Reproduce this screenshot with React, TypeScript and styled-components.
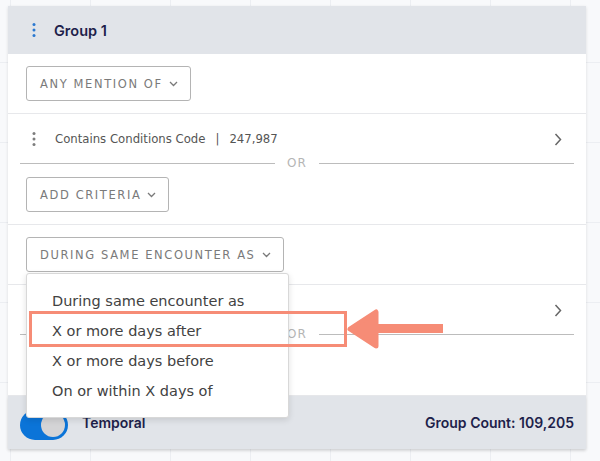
import React from "react";
import styled, { createGlobalStyle } from "styled-components";

const FONT = `"DejaVu Sans", "Noto Sans", sans-serif`;
const BOLD = `Inter, "Noto Sans", sans-serif`;

const Global = createGlobalStyle`
  html, body { margin: 0; padding: 0; }
  body {
    width: 600px;
    height: 461px;
    overflow: hidden;
    font-family: ${FONT};
    background-color: #f8f9fb;
    background-image:
      linear-gradient(to right, #eceef2 1px, transparent 1px),
      linear-gradient(to bottom, #eceef2 1px, transparent 1px);
    background-size: 80px 80px;
    background-position: 10px 62px;
  }
`;

const Stage = styled.div`
  position: relative;
  padding: 6px 14px 0 8px;
`;

const Card = styled.div`
  background: #fff;
  box-shadow: 0 1px 3px rgba(0, 0, 0, 0.12);
`;

const Header = styled.div`
  height: 48px;
  background: #e1e4e9;
  display: flex;
  align-items: center;
  padding-left: 24px;
  gap: 18px;
`;

const Title = styled.div`
  font-family: ${BOLD};
  font-size: 14.5px;
  font-weight: 600;
  color: #1e1f4b;
`;

const Section = styled.div<{ $pt?: number }>`
  padding: ${(p) => p.$pt ?? 12}px 12px 12px 18px;
  border-bottom: 1px solid #e7e8eb;
  display: flex;
  flex-direction: column;
  align-items: flex-start;
`;

const CriteriaRow = styled.div`
  align-self: stretch;
  height: 24px;
  display: flex;
  align-items: center;
  padding-left: 6px;
  padding-right: 12px;
  gap: 19px;
`;

const CriteriaText = styled.div`
  flex: 1;
  font-size: 11.7px;
  color: #555;
  white-space: nowrap;
`;

const Sep = styled.span`
  margin: 0 10px;
`;

const Divider = styled.div`
  align-self: stretch;
  margin: 6px 0 0 -6px;
  height: 12px;
  display: flex;
  align-items: center;
  gap: 12px;
  &::before, &::after {
    content: "";
    flex: 1;
    height: 1px;
    background: #bcbcbc;
  }
`;

const OrText = styled.span`
  font-size: 12px;
  letter-spacing: 1px;
  color: #b5b5b5;
`;

const SelectButton = styled.button<{ $mt?: number }>`
  margin-top: ${(p) => p.$mt ?? 0}px;
  height: 35px;
  padding: 0 12px 0 13px;
  display: flex;
  align-items: center;
  gap: 6px;
  background: #fff;
  border: 1px solid #b4b4b4;
  border-radius: 3px;
  font-family: ${FONT};
  font-size: 11.5px;
  letter-spacing: 1.6px;
  color: #7a7a7a;
  text-transform: uppercase;
`;

const Footer = styled.div`
  height: 53px;
  background: #e1e4e9;
  display: flex;
  align-items: center;
  padding: 0 12px 0 12px;
  box-shadow: 0 2px 3px rgba(0, 0, 0, 0.08);
`;

const Toggle = styled.div`
  width: 48px;
  height: 30px;
  border-radius: 15px;
  background: #0b74d8;
  display: flex;
  align-items: center;
  justify-content: flex-end;
  padding-right: 3px;
  box-sizing: border-box;
  margin-top: 5px;
`;

const Knob = styled.div`
  width: 24px;
  height: 24px;
  border-radius: 50%;
  background: #d4d4d6;
`;

const FooterLabel = styled.div<{ $grow?: boolean }>`
  font-family: ${BOLD};
  font-size: 14px;
  font-weight: 600;
  color: #1e1f4b;
  flex: ${(p) => (p.$grow ? 1 : "none")};
  margin-left: ${(p) => (p.$grow ? 14 : 0)}px;
`;

const Menu = styled.div`
  position: absolute;
  left: 26px;
  top: 273px;
  width: 263px;
  height: 145px;
  box-sizing: border-box;
  background: #fff;
  border: 1px solid #d8d8d8;
  border-radius: 3px;
  box-shadow: 0 2px 6px rgba(0, 0, 0, 0.12);
  padding: 12px 0 0 25px;
`;

const MenuItem = styled.div`
  height: 30px;
  display: flex;
  align-items: center;
  font-size: 14.5px;
  color: #424242;
`;

const Highlight = styled.div`
  position: absolute;
  left: 29px;
  top: 311px;
  width: 318px;
  height: 36px;
  box-sizing: border-box;
  border: 3px solid #f68c76;
`;

const Arrow = styled.svg`
  position: absolute;
  left: 345px;
  top: 306px;
`;

const Dots = ({ color }: { color: string }) => (
  <svg width="4" height="16" viewBox="0 0 4 16">
    <circle cx="2" cy="2.5" r="1.5" fill={color} />
    <circle cx="2" cy="8" r="1.5" fill={color} />
    <circle cx="2" cy="13.5" r="1.5" fill={color} />
  </svg>
);

const ChevronDown = () => (
  <svg width="9" height="6" viewBox="0 0 9 6">
    <path d="M1 1 L4.5 4.5 L8 1" fill="none" stroke="#7a7a7a" strokeWidth="1.3" />
  </svg>
);

const ChevronRight = () => (
  <svg width="8" height="13" viewBox="0 0 8 13">
    <path d="M1.5 1 L6.5 6.5 L1.5 12" fill="none" stroke="#666" strokeWidth="1.5" />
  </svg>
);

const Criteria = () => (
  <>
    <CriteriaRow>
      <Dots color="#7d7d7d" />
      <CriteriaText>
        Contains Conditions Code<Sep>|</Sep>247,987
      </CriteriaText>
      <ChevronRight />
    </CriteriaRow>
    <Divider>
      <OrText>OR</OrText>
    </Divider>
    <SelectButton $mt={8}>
      Add Criteria <ChevronDown />
    </SelectButton>
  </>
);

export default function App() {
  return (
    <>
      <Global />
      <Stage>
        <Card>
          <Header>
            <Dots color="#2a78d0" />
            <Title>Group 1</Title>
          </Header>
          <Section>
            <SelectButton>
              Any Mention Of <ChevronDown />
            </SelectButton>
          </Section>
          <Section $pt={13}>
            <Criteria />
          </Section>
          <Section>
            <SelectButton>
              During Same Encounter As <ChevronDown />
            </SelectButton>
          </Section>
          <Section $pt={13}>
            <Criteria />
          </Section>
          <Footer>
            <Toggle>
              <Knob />
            </Toggle>
            <FooterLabel $grow>Temporal</FooterLabel>
            <FooterLabel>Group Count: 109,205</FooterLabel>
          </Footer>
        </Card>
        <Menu>
          <MenuItem>During same encounter as</MenuItem>
          <MenuItem>X or more days after</MenuItem>
          <MenuItem>X or more days before</MenuItem>
          <MenuItem>On or within X days of</MenuItem>
        </Menu>
        <Highlight />
        <Arrow width="100" height="46" viewBox="0 0 100 46">
          <path d="M30 18 H98 V27 H30" fill="#f68c76" />
          <path
            d="M5 23 L31 6 L31 40 Z"
            fill="#f68c76"
            stroke="#f68c76"
            strokeWidth="5"
            strokeLinejoin="round"
          />
        </Arrow>
      </Stage>
    </>
  );
}
